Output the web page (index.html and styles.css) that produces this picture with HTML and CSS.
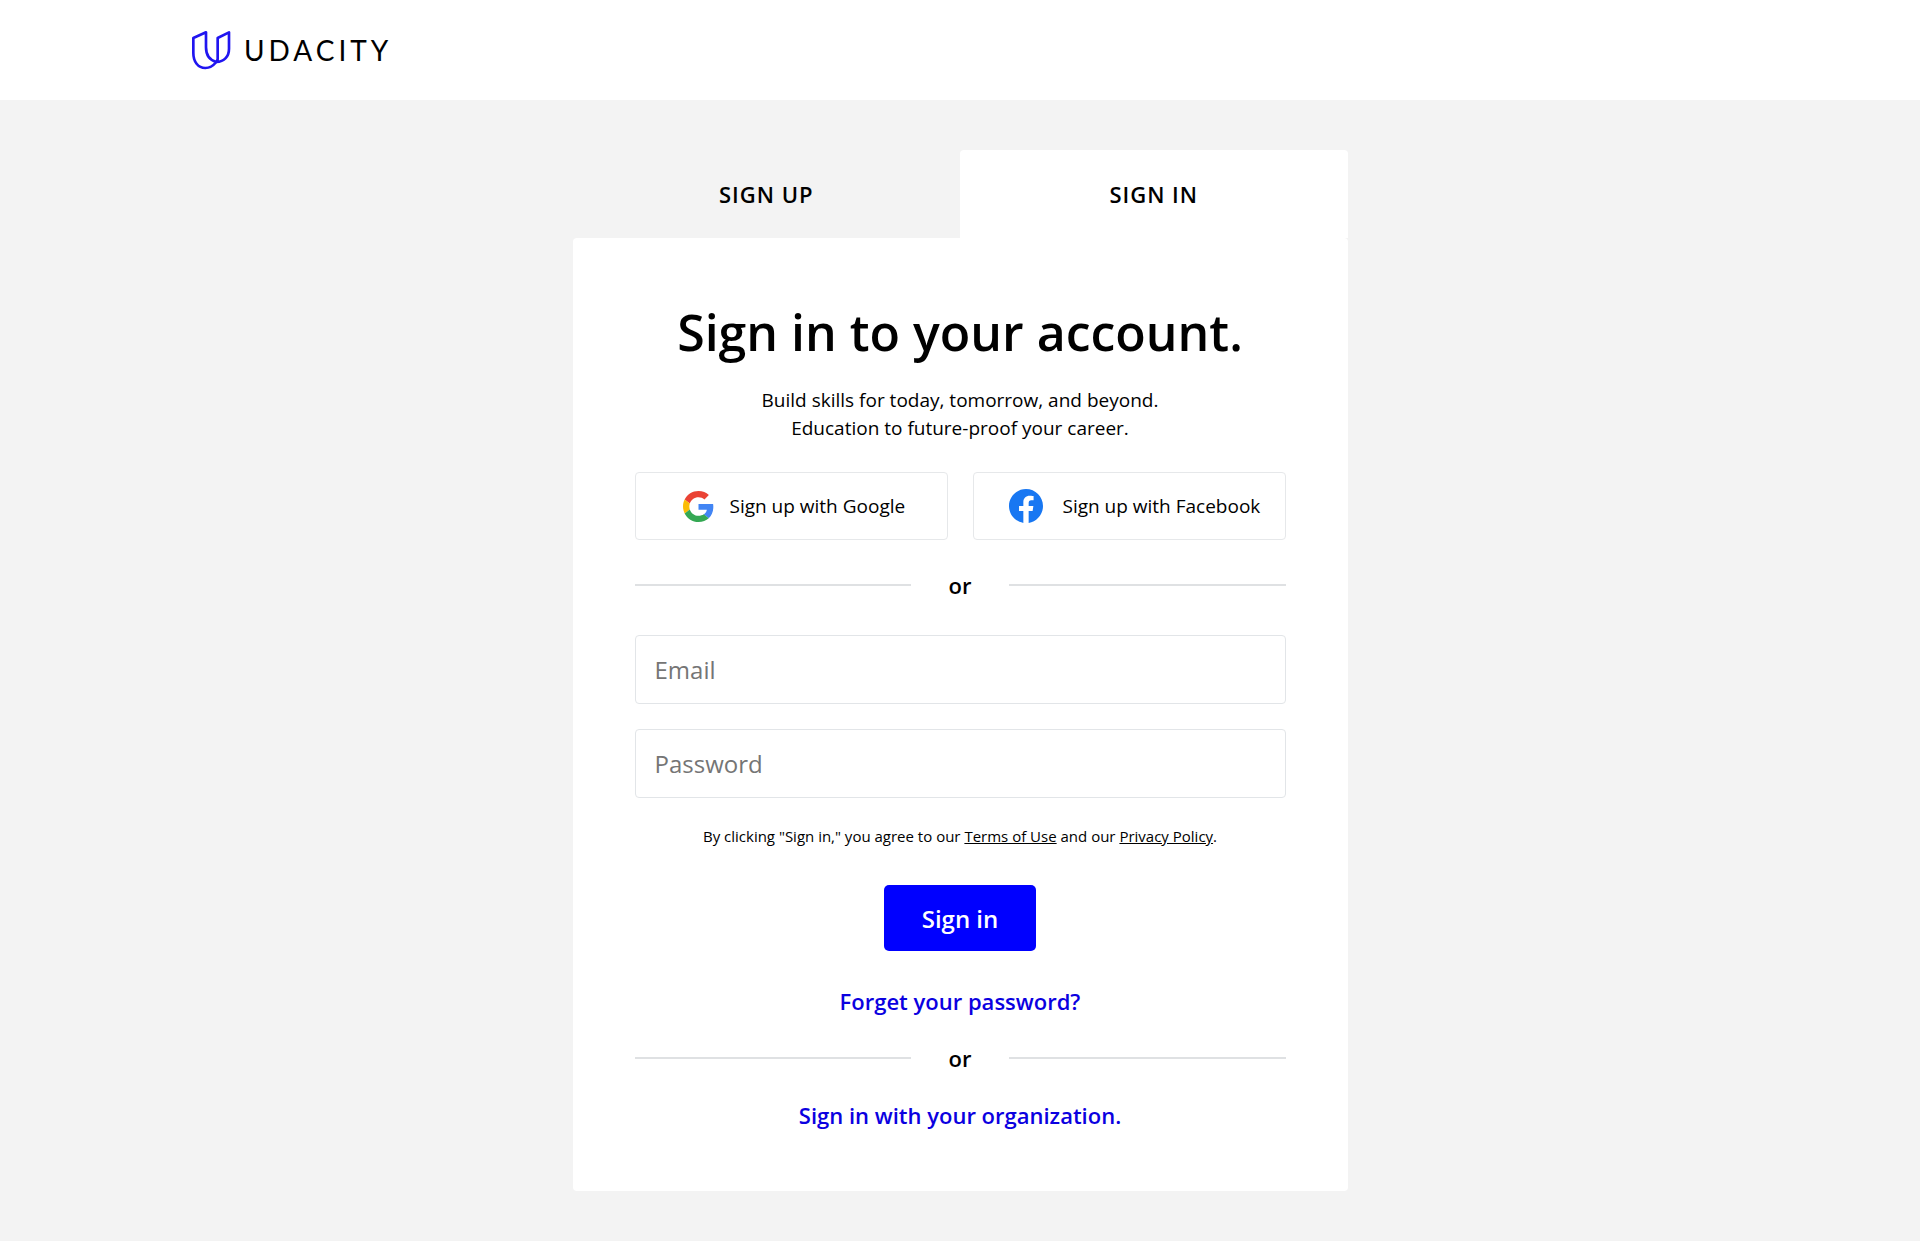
FILE: index.html
```html
<!DOCTYPE html>
<html lang="en">
<head>
<meta charset="utf-8">
<meta name="viewport" content="width=device-width, initial-scale=1">
<title>Sign in - Udacity</title>
<link rel="stylesheet" href="styles.css">
</head>
<body>
<header class="site-header">
  <a class="brand" href="#">
    <svg class="brand-mark" viewBox="36 30 120 120" aria-hidden="true">
      <path d="M40 54L78 37V82C78 106 90 121 109 126C99 138 89 144 76 144C54 144 40 125 40 99Z"/>
      <path d="M113 54L147 37V86C147 109 133 125 109 126L113 118Z"/>
    </svg>
    <span class="brand-name">UDACITY</span>
  </a>
</header>
<main class="page">
  <section class="auth">
    <nav class="tabs">
      <button class="tab" type="button">SIGN UP</button>
      <button class="tab tab-active" type="button">SIGN IN</button>
    </nav>
    <div class="card">
      <h1 class="title">Sign in to your account.</h1>
      <p class="subtitle">Build skills for today, tomorrow, and beyond.<br>Education to future-proof your career.</p>
      <div class="social">
        <button class="social-button google" type="button">
          <svg class="google-icon" viewBox="0 0 48 48" aria-hidden="true">
            <path fill="#EA4335" d="M24 9.500c3.540 0 6.710 1.220 9.210 3.600l6.850-6.850C35.900 2.380 30.470 0 24 0 14.620 0 6.510 5.380 2.560 13.220l7.980 6.190C12.430 13.720 17.740 9.500 24 9.500z"/>
            <path fill="#4285F4" d="M46.980 24.550c0-1.570-.15-3.090-.38-4.550H24v9.020h12.940c-.58 2.960-2.260 5.480-4.780 7.180l7.730 6c4.510-4.180 7.090-10.360 7.090-17.650z"/>
            <path fill="#FBBC05" d="M10.530 28.590c-.48-1.450-.76-2.990-.76-4.590s.27-3.140.76-4.590l-7.980-6.190C.92 16.460 0 20.120 0 24c0 3.880.92 7.540 2.560 10.780l7.970-6.190z"/>
            <path fill="#34A853" d="M24 48c6.480 0 11.930-2.130 15.890-5.810l-7.730-6c-2.150 1.450-4.920 2.300-8.160 2.300-6.260 0-11.570-4.220-13.470-9.910l-7.980 6.190C6.510 42.620 14.620 48 24 48z"/>
          </svg>
          <span>Sign up with Google</span>
        </button>
        <button class="social-button facebook" type="button">
          <svg class="facebook-icon" viewBox="0 0 24 24" aria-hidden="true">
            <path fill="#1877F2" d="M24 12.073c0-6.627-5.373-12-12-12s-12 5.373-12 12c0 5.990 4.388 10.954 10.125 11.854v-8.385H7.078v-3.470h3.047V9.430c0-3.007 1.792-4.669 4.533-4.669 1.312 0 2.686.235 2.686.235v2.953H15.830c-1.491 0-1.956.925-1.956 1.874v2.250h3.328l-.532 3.470h-2.796v8.385C19.612 23.027 24 18.062 24 12.073z"/>
          </svg>
          <span>Sign up with Facebook</span>
        </button>
      </div>
      <div class="divider">or</div>
      <form class="form">
        <input class="field" type="email" placeholder="Email" aria-label="Email">
        <input class="field" type="password" placeholder="Password" aria-label="Password">
        <p class="terms">By clicking "Sign in," you agree to our <a href="#">Terms of Use</a> and our <a href="#">Privacy Policy</a>.</p>
        <button class="submit" type="submit">Sign in</button>
      </form>
      <a class="link" href="#">Forget your password?</a>
      <div class="divider divider-compact">or</div>
      <a class="link" href="#">Sign in with your organization.</a>
    </div>
  </section>
</main>
</body>
</html>
```
FILE: styles.css
```css
* {
  box-sizing: border-box;
}

body {
  margin: 0;
  min-height: 100vh;
  display: flex;
  flex-direction: column;
  background: #f3f3f3;
  color: #000;
  font-family: "Open Sans", "Noto Sans", sans-serif;
  font-size: 20px;
}

button,
input {
  font: inherit;
  color: inherit;
}

button {
  cursor: pointer;
}

.site-header {
  display: flex;
  align-items: center;
  height: 100px;
  padding: 0 10%;
  background: #fff;
}

.brand {
  display: flex;
  align-items: center;
  gap: 12px;
  color: #000;
  text-decoration: none;
}

.brand-mark {
  width: 40px;
  height: 40px;
  fill: none;
  stroke: #2015f0;
  stroke-width: 8;
  stroke-linejoin: round;
}

.brand-name {
  font-family: Lato, sans-serif;
  font-size: 28px;
  line-height: 32px;
  letter-spacing: 4px;
}

.page {
  flex: 1;
  padding: 50px 24px;
}

.auth {
  max-width: 775px;
  margin: 0 auto;
}

.tabs {
  display: flex;
}

.tab {
  flex: 1;
  height: 88px;
  padding: 0;
  border: 0;
  border-radius: 4px 4px 0 0;
  background: transparent;
  font-size: 22px;
  font-weight: 600;
  letter-spacing: 1px;
}

.tab-active {
  background: #fff;
}

.card {
  display: flex;
  flex-direction: column;
  padding: 58px 62px 60px;
  border-radius: 4px;
  background: #fff;
  text-align: center;
}

.title {
  margin: 0;
  font-size: 50px;
  font-weight: 600;
  line-height: 72px;
}

.subtitle {
  margin: 18px 0 30px;
  font-size: 19px;
  line-height: 28px;
}

.social {
  display: grid;
  grid-template-columns: 1fr 1fr;
  gap: 25px;
}

.social-button {
  display: flex;
  align-items: center;
  height: 68px;
  padding: 0;
  border: 1px solid #e6e8ea;
  border-radius: 4px;
  background: #fff;
  font-size: 19px;
}

.google {
  gap: 16px;
  padding-left: 47px;
}

.facebook {
  gap: 20px;
  padding-left: 35px;
}

.google-icon {
  width: 31px;
  height: 31px;
}

.facebook-icon {
  width: 34px;
  height: 34px;
}

.divider {
  display: flex;
  align-items: center;
  gap: 38px;
  height: 32px;
  margin: 29px 0 34px;
  font-size: 22px;
  font-weight: 600;
}

.divider::before,
.divider::after {
  content: "";
  flex: 1;
  height: 2px;
  background: #dfe1e3;
}

.divider-compact {
  margin: 25px 0;
}

.form {
  display: flex;
  flex-direction: column;
  margin-bottom: 34px;
}

.field {
  width: 100%;
  height: 69px;
  margin-bottom: 25px;
  padding: 0 19px;
  border: 1px solid #e2e5e8;
  border-radius: 4px;
  background: #fff;
  font-size: 24px;
}

.field::placeholder {
  color: #757575;
  opacity: 1;
}

.terms {
  margin: 0 0 36px;
  font-size: 15px;
  line-height: 26px;
}

.terms a {
  color: inherit;
}

.submit {
  align-self: center;
  width: 152px;
  height: 66px;
  border: 0;
  border-radius: 5px;
  background: #00f;
  color: #fff;
  font-size: 24px;
  font-weight: 600;
}

.link {
  align-self: center;
  color: #0b00e0;
  font-size: 22px;
  font-weight: 600;
  line-height: 32px;
  text-decoration: none;
}
```
